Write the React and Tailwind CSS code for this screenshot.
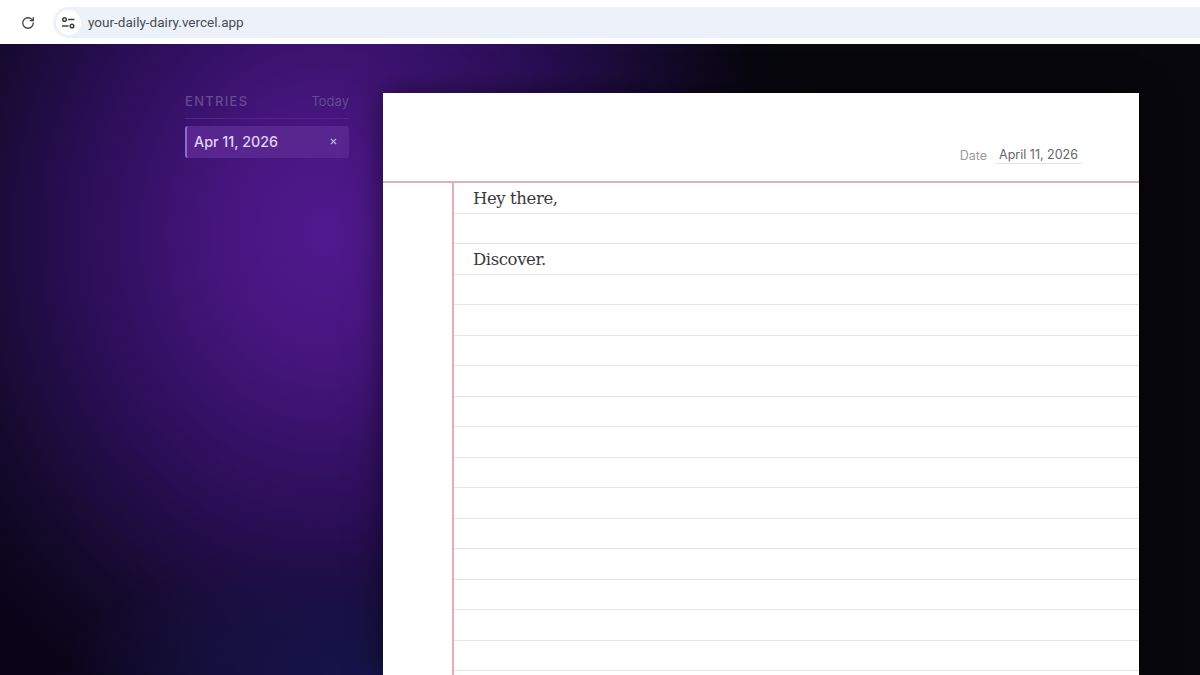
import { RotateCw, X } from "lucide-react";

const lines = ["Hey there,", "", "Discover.", "", "", "", "", "", "", "", "", "", "", "", "", "", ""];

function BrowserBar() {
  return (
    <div className="flex h-[44px] items-center bg-white pt-[1px]">
      <div className="flex w-[53px] shrink-0 justify-center pl-[3px]">
        <RotateCw className="h-[14px] w-[14px] text-[#3c4043]" strokeWidth={2.2} />
      </div>
      <div className="flex h-[31px] flex-1 items-center rounded-l-full bg-[#edf2fa] pl-[3px]">
        <div className="flex h-[25px] w-[25px] items-center justify-center rounded-full bg-white">
          <svg width="15" height="14" viewBox="0 0 15 14" fill="none" stroke="#3c4043" strokeWidth="1.5">
            <circle cx="3.5" cy="3.5" r="1.8" />
            <path d="M7 3.5h6.5" />
            <path d="M1 10h6.5" />
            <circle cx="11" cy="10" r="1.8" />
          </svg>
        </div>
        <span className="ml-[7px] font-['Roboto',sans-serif] text-[13.55px] text-[#494c50]">your-daily-dairy.vercel.app</span>
      </div>
    </div>
  );
}

function Sidebar() {
  return (
    <div className="w-[164px] shrink-0 pt-[48px]">
      <div className="flex items-center justify-between border-b border-[#561f93] pb-[6px]">
        <span className="text-[13px] font-medium tracking-[0.1em] text-[#624c94]">ENTRIES</span>
        <span className="text-[13px] text-[#624c94]">Today</span>
      </div>
      <div className="mt-[7px] flex h-[32px] items-center justify-between rounded-[3px] border-l-2 border-[#8f68d0] bg-[#57278f] pl-[7px] pr-[11px]">
        <span className="text-[14.3px] font-medium text-[#e0d4f4]">Apr 11, 2026</span>
        <X className="h-[9px] w-[9px] text-[#c4aee4]" strokeWidth={3} />
      </div>
    </div>
  );
}

function Paper() {
  return (
    <div className="ml-[34px] mt-[49px] w-[756px] shrink-0 bg-white shadow-[0_0_28px_rgba(0,0,0,0.55)]">
      <div className="flex h-[90px] items-start justify-end border-b-2 border-[#e0b0b4] pr-[57px] pt-[53px]">
        <span className="mr-[8px] mt-[1px] text-[12.5px] text-[#9a9a9a]">Date</span>
        <span className="border-b border-[#e5e5e5] px-[4px] text-[12.5px] leading-[17px] text-[#666666]">April 11, 2026</span>
      </div>
      <div className="ml-[69px] border-l-2 border-[#e0b0b4]">
        {lines.map((line, i) => (
          <div key={i} className="h-[30.5px] border-b border-[#e4e4f0] pl-[19px] font-['DejaVu_Serif',serif] text-[16.5px] leading-[32px] tracking-[-0.4px] text-[#3a3a3a]">
            {line}
          </div>
        ))}
      </div>
    </div>
  );
}

export default function App() {
  return (
    <div className="h-[675px] w-[1200px] overflow-hidden bg-[#07070d] font-['Inter',sans-serif]">
      <BrowserBar />
      <div className="flex h-[631px] bg-[radial-gradient(ellipse_300px_130px_at_360px_631px,#16144a_0%,rgba(22,20,74,0.6)_50%,transparent_100%),radial-gradient(ellipse_450px_530px_at_325px_190px,#51198f_0%,#44157b_25%,#2a0e56_55%,#150a2e_80%,transparent_100%),linear-gradient(to_right,#0a0418,#07070d_70%)] pl-[185px]">
        <Sidebar />
        <Paper />
      </div>
    </div>
  );
}
